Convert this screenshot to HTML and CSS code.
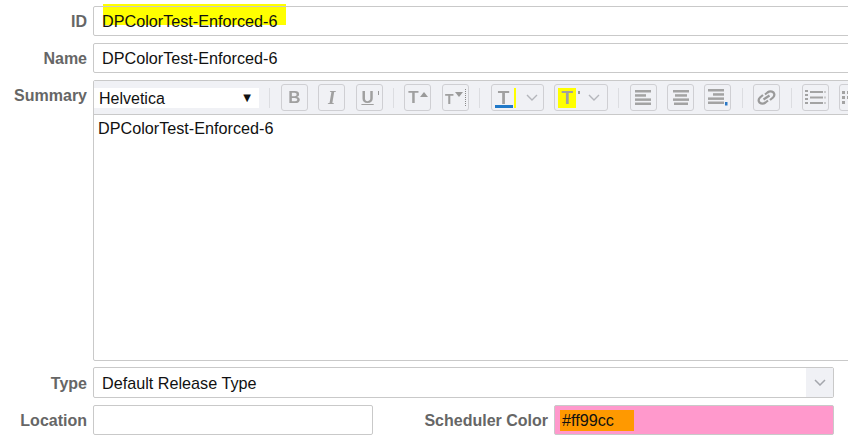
FILE: index.html
```html
<!DOCTYPE html>
<html lang="en">
<head>
    <meta charset="UTF-8">
    <title>Release Details</title>
    <link rel="stylesheet" href="styles.css">
</head>
<body>

<div class="form">
    <div class="row row-id">
        <label class="field-label">ID</label>
        <div class="input wide">DPColorTest-Enforced-6</div>
        <span class="marker-id"></span>
    </div>
    <div class="row row-name">
        <label class="field-label">Name</label>
        <div class="input wide">DPColorTest-Enforced-6</div>
    </div>
    <div class="row row-summary">
        <label class="field-label summary-label">Summary</label>
        <div class="editor">
            <div class="toolbar">
                <div class="font-select"><span class="font-name">Helvetica</span><span class="font-arrow">▼</span></div>
                <span class="sep"></span>
                <span class="tool"><b class="glyph">B</b></span>
                <span class="tool"><i class="glyph glyph-italic">I</i></span>
                <span class="tool"><u class="glyph glyph-under">U</u><span class="tick"></span></span>
                <span class="sep"></span>
                <span class="tool">
                    <b class="glyph">T</b>
                    <svg class="arrow-up" width="8" height="5" viewBox="0 0 8 5"><path d="M0 5L4 0L8 5Z" fill="#9a9a9a"/></svg>
                </span>
                <span class="tool">
                    <b class="glyph glyph-small">T</b>
                    <svg class="arrow-down" width="8" height="5" viewBox="0 0 8 5"><path d="M0 0L8 0L4 5Z" fill="#9a9a9a"/></svg>
                    <span class="dots"></span>
                </span>
                <span class="sep"></span>
                <span class="tool tool-color">
                    <span class="swatch-text"><b class="glyph glyph-large">T</b></span>
                    <span class="marker-bar"></span>
                    <svg class="chevron" width="12" height="7" viewBox="0 0 12 7"><path d="M1 1L6 6L11 1" fill="none" stroke="#b4b6bc" stroke-width="1.4"/></svg>
                </span>
                <span class="tool tool-color tool-back">
                    <span class="marker-block"><b class="glyph glyph-large">T</b></span>
                    <span class="tick tick-back"></span>
                    <svg class="chevron" width="12" height="7" viewBox="0 0 12 7"><path d="M1 1L6 6L11 1" fill="none" stroke="#b4b6bc" stroke-width="1.4"/></svg>
                </span>
                <span class="sep"></span>
                <span class="tool">
                    <svg width="16" height="15" viewBox="0 0 16 15"><g fill="#a3a3a3"><rect x="0" y="0" width="16" height="2.500"/><rect x="0" y="4.200" width="11" height="2.500"/><rect x="0" y="8.400" width="16" height="2.500"/><rect x="0" y="12.500" width="16" height="2.500"/></g></svg>
                </span>
                <span class="tool">
                    <svg width="16" height="15" viewBox="0 0 16 15"><g fill="#a3a3a3"><rect x="0" y="0" width="16" height="2.500"/><rect x="2" y="4.200" width="12" height="2.500"/><rect x="0" y="8.400" width="16" height="2.500"/><rect x="1" y="12.500" width="14" height="2.500"/></g></svg>
                </span>
                <span class="tool">
                    <svg width="21" height="17" viewBox="0 0 21 17"><g fill="#a3a3a3"><rect x="1" y="0" width="16" height="2.500"/><rect x="6" y="4.200" width="11" height="2.500"/><rect x="1" y="8.400" width="16" height="2.500"/><rect x="1" y="12.500" width="16" height="2.500"/></g><rect x="18" y="13" width="2.500" height="3.500" fill="#2a78c6"/></svg>
                </span>
                <span class="sep"></span>
                <span class="tool">
                    <svg width="19" height="15" viewBox="0 0 19 15"><path d="M8 4.500L10.500 2.500C12.500 1 14.500 1 16.500 2.500C18 4.500 17.500 6 16 7.500L13 10M11 10.500L8.500 12.500C6.500 14 4.500 14 2.500 12.500C1 10.500 1.500 9 3 7.500L6 5M6.500 9.500L12.500 5.500" fill="none" stroke="#9a9a9a" stroke-width="2.200"/></svg>
                </span>
                <span class="sep"></span>
                <span class="tool">
                    <svg width="21" height="15" viewBox="0 0 21 15"><g fill="#a3a3a3"><rect x="0" y="0" width="3" height="2"/><rect x="0" y="4" width="3" height="2"/><rect x="0" y="8" width="3" height="2"/><rect x="0" y="12" width="3" height="2"/><rect x="5" y="1" width="13" height="2"/><rect x="5" y="6.500" width="13" height="2"/><rect x="5" y="12" width="13" height="2"/><rect x="19.500" y="1" width="1" height="2"/><rect x="19.500" y="6.500" width="1" height="2"/><rect x="19.500" y="12" width="1" height="2"/></g></svg>
                </span>
                <span class="tool">
                    <svg width="21" height="15" viewBox="0 0 21 15"><g fill="#a3a3a3"><rect x="0" y="1" width="3" height="3"/><rect x="5" y="1" width="3" height="3"/><rect x="0" y="6" width="3" height="3"/><rect x="5" y="6" width="3" height="3"/><rect x="0" y="11" width="3" height="3"/></g></svg>
                </span>
            </div>
            <div class="editor-body">DPColorTest-Enforced-6</div>
        </div>
    </div>
    <div class="row row-type">
        <label class="field-label">Type</label>
        <div class="input type-select">
            <span class="type-value">Default Release Type</span>
            <span class="type-btn">
                <svg width="12" height="7" viewBox="0 0 12 7"><path d="M1 1L6 6L11 1" fill="none" stroke="#a4a6ac" stroke-width="1.500"/></svg>
            </span>
        </div>
    </div>
    <div class="row row-location">
        <label class="field-label">Location</label>
        <div class="input location"></div>
        <label class="field-label scheduler-label">Scheduler Color</label>
        <div class="input color-input"><span class="color-value">#ff99cc</span></div>
    </div>
</div>

</body>
</html>
```

FILE: styles.css
```css
html, body {
    margin: 0;
    height: 442px;
    overflow: hidden;
    background-color: #fff;
}
body {
    width: 848px;
    font-family: "Liberation Sans", Arial, sans-serif;
    font-size: 16.2px;
    color: #111;
}
.form {
    width: 848px;
    overflow: hidden;
    padding-top: 6px;
}
.row {
    display: flex;
    align-items: center;
    position: relative;
}
.row-id { height: 30px; margin-bottom: 7px; }
.row-name { height: 30px; margin-bottom: 7px; }
.row-summary { align-items: flex-start; margin-bottom: 6px; }
.row-type { height: 31px; margin-bottom: 7px; }
.row-location { height: 30px; }

.field-label {
    width: 87px;
    margin-right: 6px;
    padding-top: 2px;
    flex-shrink: 0;
    text-align: right;
    font-size: 16px;
    font-weight: bold;
    color: #666;
}
.summary-label { padding-top: 7px; }
.input {
    box-sizing: border-box;
    height: 100%;
    border: 1px solid #c9c9c9;
    border-radius: 2px;
    background-color: #fff;
    padding: 1px 8px 0;
    display: flex;
    align-items: center;
    flex-shrink: 0;
}
.wide { width: 860px; }

.marker-id {
    position: absolute;
    left: 103px;
    top: -2px;
    width: 183px;
    height: 21px;
    background-color: #ffff00;
    z-index: 1;
}
.row-id .input {
    position: relative;
    z-index: 2;
    background-color: transparent;
}

.editor {
    box-sizing: border-box;
    width: 860px;
    height: 281px;
    flex-shrink: 0;
    border: 1px solid #c9c9c9;
    border-radius: 2px;
}
.toolbar {
    box-sizing: border-box;
    height: 34px;
    display: flex;
    align-items: center;
    gap: 10.4px;
    background-color: #f0f1f5;
    border-bottom: 1px solid #c9c9c9;
}
.font-select {
    box-sizing: border-box;
    width: 165px;
    height: 20px;
    padding: 0 6px 0 5px;
    display: flex;
    align-items: center;
    justify-content: space-between;
    background-color: #fff;
    font-size: 16px;
    flex-shrink: 0;
}
.font-name { padding-top: 2px; }
.font-arrow {
    font-family: "DejaVu Sans", sans-serif;
    font-size: 10px;
    color: #111;
    margin-right: 2px;
}
.sep {
    width: 1px;
    height: 20px;
    background-color: #dcdde1;
    flex-shrink: 0;
}
.tool {
    box-sizing: border-box;
    width: 27px;
    height: 27px;
    flex-shrink: 0;
    display: flex;
    align-items: center;
    justify-content: center;
    gap: 1px;
    position: relative;
    border: 1px solid #cfcfd3;
    border-radius: 3px;
}
.tool svg, .glyph {
    filter: blur(0.35px);
}
.glyph {
    font-size: 17px;
    font-weight: bold;
    line-height: 1;
    color: #a0a0a0;
    font-style: normal;
}
.glyph-italic { font-family: "Liberation Serif", serif; font-style: italic; font-size: 19px; }
.glyph-under { margin-right: 3px; }
.glyph-small { font-size: 14px; margin-top: 3px; }
.glyph-large { font-size: 19px; }
.arrow-up { margin-top: -6px; }
.arrow-down { margin-top: -7px; }
.tick {
    position: absolute;
    right: 3px;
    top: 6px;
    width: 1px;
    height: 4px;
    background-color: #999;
}
.tick-back { left: 23px; top: 6px; right: auto; height: 3px; width: 2px; }
.dots {
    width: 1px;
    height: 17px;
    border-right: 1px dotted #888;
}
.tool-color {
    width: 53.5px;
    justify-content: flex-start;
}
.swatch-text {
    display: flex;
    justify-content: center;
    box-sizing: border-box;
    width: 18px;
    height: 20px;
    margin: 0 0 0 3px;
    border-bottom: 3px solid #1f78c8;
}
.marker-bar {
    width: 2px;
    height: 20px;
    background-color: #ffff00;
}
.chevron { margin-left: 9px; }
.marker-block {
    width: 18px;
    height: 20px;
    margin-left: 3px;
    background-color: #ffff00;
    display: flex;
    align-items: center;
    justify-content: center;
}
.tool-back .chevron { margin-left: 11px; }
.editor-body {
    padding: 4px 4px;
    line-height: 18px;
}

.type-select {
    width: 741px;
    padding: 0 0 0 8px;
    justify-content: space-between;
    align-items: stretch;
}
.type-value { align-self: center; padding-top: 2px; }
.type-btn {
    width: 27px;
    display: flex;
    align-items: center;
    justify-content: center;
    background-color: #f0f1f5;
}
.location { width: 280px; }
.scheduler-label {
    width: 175px;
    margin-right: 6px;
}
.color-input {
    width: 280px;
    padding: 0 0 0 5px;
    background-color: #ff99cc;
}
.color-value {
    width: 74px;
    height: 21px;
    line-height: 21px;
    padding-left: 2px;
    box-sizing: border-box;
    background-color: #ff9900;
}
```
